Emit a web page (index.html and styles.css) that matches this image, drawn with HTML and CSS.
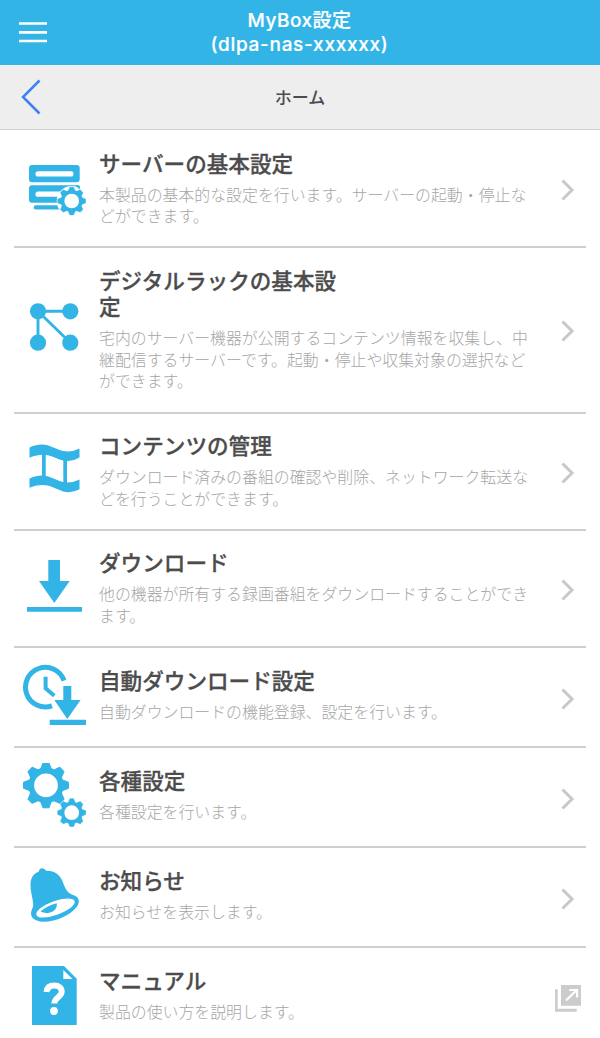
FILE: index.html
```html
<!DOCTYPE html>
<html lang="ja">
<head>
<meta charset="utf-8">
<title>MyBox設定</title>
<link rel="stylesheet" href="styles.css">
</head>
<body>
<svg class="defs" width="0" height="0">
  <symbol id="gear" viewBox="-24 -24 48 48">
    <circle r="14.800" fill="none" stroke="currentColor" stroke-width="5.800"/>
    <g fill="currentColor" stroke="currentColor" stroke-width="1" stroke-linejoin="round">
      <path id="tooth" d="M-3-22.500H3L5.500-16h-11z"/>
      <use href="#tooth" transform="rotate(45)"/><use href="#tooth" transform="rotate(90)"/>
      <use href="#tooth" transform="rotate(135)"/><use href="#tooth" transform="rotate(180)"/>
      <use href="#tooth" transform="rotate(225)"/><use href="#tooth" transform="rotate(270)"/>
      <use href="#tooth" transform="rotate(315)"/>
    </g>
  </symbol>
  <symbol id="chevron" viewBox="0 0 14 22">
    <path d="M1.500 1.500L11 11l-9.500 9.500" fill="none" stroke="currentColor" stroke-width="3"/>
  </symbol>
</svg>

<header class="header">
  <svg class="menu" viewBox="0 0 28 22"><path d="M0 1.500h28M0 10.300h28M0 19h28" stroke="currentColor" stroke-width="2.700"/></svg>
  <h1 class="brand"><span class="brand-name">MyBox設定</span><span class="brand-host">(dlpa-nas-xxxxxx)</span></h1>
</header>
<nav class="subbar">
  <svg class="back" viewBox="0 0 20 36"><path d="M18.500 1.500L2 18l16.500 16.500" fill="none" stroke="currentColor" stroke-width="2.500"/></svg>
  <h2 class="page-title">ホーム</h2>
</nav>

<main class="list">
  <a class="row">
    <svg class="icon" viewBox="0 0 64 68">
      <rect x="7" y="10" width="50.700" height="17.300" rx="3" fill="currentColor"/>
      <rect x="13.500" y="16.200" width="38" height="5.300" rx="2.600" fill="#fff"/>
      <rect x="7" y="30.300" width="50.700" height="17.400" rx="3" fill="currentColor"/>
      <rect x="13.500" y="36.500" width="38" height="5.300" rx="2.600" fill="#fff"/>
      <rect x="11.700" y="50.300" width="30" height="4.200" rx="2" fill="currentColor"/>
      <circle cx="49.700" cy="46" r="15" fill="#fff"/>
      <path d="M53.500 30.200h3.200q1 0 1 1v3.500z" fill="currentColor"/>
      <use href="#gear" x="34.900" y="31.200" width="29.600" height="29.600"/>
    </svg>
    <div class="text"><h3 class="title">サーバーの基本設定</h3><p class="desc">本製品の基本的な設定を行います。サーバーの起動・停止な<br>どができます。</p></div>
    <svg class="chevron"><use href="#chevron"/></svg>
  </a>
  <a class="row">
    <svg class="icon" viewBox="0 0 64 68">
      <path d="M48.300 15.300H16v31.400M16 15.300l32.300 31.400" fill="none" stroke="currentColor" stroke-width="2.900"/>
      <g fill="currentColor"><circle cx="16" cy="15.300" r="8.100"/><circle cx="48.300" cy="15.300" r="8.100"/><circle cx="16" cy="46.700" r="8.100"/><circle cx="48.300" cy="46.700" r="8.100"/></g>
    </svg>
    <div class="text"><h3 class="title">デジタルラックの基本設<br>定</h3><p class="desc">宅内のサーバー機器が公開するコンテンツ情報を収集し、中<br>継配信するサーバーです。起動・停止や収集対象の選択など<br>ができます。</p></div>
    <svg class="chevron"><use href="#chevron"/></svg>
  </a>
  <a class="row">
    <svg class="icon" viewBox="0 0 64 68">
      <g fill="currentColor">
        <path d="M7.500 10.500C24 3 31 12 41 14q9 1.500 16.500-2.500v9q-8 5-16.500 3C30 20.500 24 14 7.500 20.700z"/>
        <path d="M7.500 41.500C24 34 31 43 41 45q9 1.500 16.500-2.500v9.700q-8 4.500-16.500 2.200C30 50.500 24 44.500 7.500 50.700z"/>
        <path d="M20 15.500h3.700v25H20zM41.300 22h3.700v24h-3.700z"/>
      </g>
    </svg>
    <div class="text"><h3 class="title">コンテンツの管理</h3><p class="desc">ダウンロード済みの番組の確認や削除、ネットワーク転送な<br>どを行うことができます。</p></div>
    <svg class="chevron"><use href="#chevron"/></svg>
  </a>
  <a class="row">
    <svg class="icon" viewBox="0 0 64 68"><path fill="currentColor" d="M26.300 5H38v21h9.700L32.300 48 17 26h9.300zM5 52h55v4.700H5z"/></svg>
    <div class="text"><h3 class="title">ダウンロード</h3><p class="desc">他の機器が所有する録画番組をダウンロードすることができ<br>ます。</p></div>
    <svg class="chevron"><use href="#chevron"/></svg>
  </a>
  <a class="row">
    <svg class="icon" viewBox="0 0 64 68">
      <path d="M42 17.600A19.800 19.800 0 1 0 30 42.800" fill="none" stroke="currentColor" stroke-width="5"/>
      <path d="M23.600 13.700V25.300L32.300 32.700" fill="none" stroke="currentColor" stroke-width="4"/>
      <path fill="currentColor" d="M41.300 23h8v14h9.300L45.300 56l-13-19h9zM27.700 56.700H64V62H27.700z"/>
    </svg>
    <div class="text"><h3 class="title">自動ダウンロード設定</h3><p class="desc">自動ダウンロードの機能登録、設定を行います。</p></div>
    <svg class="chevron"><use href="#chevron"/></svg>
  </a>
  <a class="row">
    <svg class="icon" viewBox="0 0 64 68">
      <use href="#gear" x="0" y="-1.700" width="48" height="48"/>
      <use href="#gear" x="34.900" y="34.900" width="29.600" height="29.600"/>
    </svg>
    <div class="text"><h3 class="title">各種設定</h3><p class="desc">各種設定を行います。</p></div>
    <svg class="chevron"><use href="#chevron"/></svg>
  </a>
  <a class="row">
    <svg class="icon" viewBox="0 0 64 68">
      <path fill="currentColor" d="M16.700 8.700Q17.300 5.300 20 5.200T24 7.700C31 7.400 37 10.500 40 17 43 24.500 44.500 30 51 32 57 33.500 58.500 39 55 43.500 49 52 34 58.700 22 58.700 12 58.700 7.500 54 9.500 47.500 10.500 45 11.600 43.500 11.100 40 10.600 34 8.300 28 8.500 21.500 8.700 14.500 11.500 10.500 16.700 8.700z"/>
      <ellipse cx="33.500" cy="45" rx="20.300" ry="6.900" transform="rotate(-20 33.500 45)" fill="#fff"/>
      <path fill="currentColor" d="M18.500 48.600Q24 43 34.700 40.200C35.500 45 32.500 48.500 27 49.700Q22.500 50.600 18.500 48.600z"/>
    </svg>
    <div class="text"><h3 class="title">お知らせ</h3><p class="desc">お知らせを表示します。</p></div>
    <svg class="chevron"><use href="#chevron"/></svg>
  </a>
  <a class="row">
    <svg class="icon" viewBox="0 0 64 68">
      <path fill="currentColor" d="M10 2h32l12.700 12.700V61H10z"/>
      <path fill="#fff" d="M41.300 6v8.900h9.200z"/>
      <path d="M24.500 28C25 23 28 21.500 32.200 21.500 37 21.500 39.700 24 39.700 27.500c0 5.500-7.400 6-7.400 12" fill="none" stroke="#fff" stroke-width="6"/>
      <circle cx="32" cy="47" r="3.900" fill="#fff"/>
    </svg>
    <div class="text"><h3 class="title">マニュアル</h3><p class="desc">製品の使い方を説明します。</p></div>
    <svg class="external" viewBox="0 0 26 27">
      <path fill="currentColor" d="M6 0h20v20.700H6zM0 4.300h2.700v19.500h19V26.700H0z"/>
      <path d="M11 15.500L21.800 5M14.300 5h7.800v7.500" fill="none" stroke="#fff" stroke-width="2.200"/>
    </svg>
  </a>
</main>
</body>
</html>
```
FILE: styles.css
```css
* { box-sizing: border-box; }
body {
  margin: 0;
  height: 1038px;
  overflow: hidden;
  background: #fff;
  font-family: "Noto Sans CJK JP", sans-serif;
}
h1, h2, h3, p { margin: 0; }
.defs { position: absolute; }

.header, .subbar {
  display: grid;
  grid-template-columns: 60px 1fr 60px;
  align-items: center;
  height: 65px;
}
.header { background: #33b4e6; color: #fff; }
.menu { width: 28px; height: 22px; margin-left: 19px; }
.brand {
  display: flex;
  flex-direction: column;
  align-items: center;
  margin-left: -1px;
  font-family: Inter, "Noto Sans CJK JP", sans-serif;
  font-size: 19px;
  line-height: 23.500px;
  font-weight: 500;
  -webkit-text-stroke: 0.200px #fff;
}
.brand-name { letter-spacing: 0.500px; }
.brand-host { letter-spacing: 0.700px; }

.subbar { background: #eee; border-bottom: 1px solid #d4d4d4; }
.back { width: 20px; height: 36px; margin-left: 21px; color: #3c82f6; }
.page-title {
  text-align: center;
  font-size: 17px;
  line-height: 24px;
  font-weight: 500;
  color: #4c4c4c;
}

.list { padding: 1px 14px 0; }
.row {
  display: flex;
  align-items: center;
  min-height: 100px;
  padding: 0 11px 0 8px;
  border-bottom: 2px solid #cfcfcf;
}
.row:last-child { border-bottom: 0; }
.icon { flex: none; width: 64px; height: 68px; margin-right: 13px; color: #33b4e6; }
.text { flex: 1; align-self: flex-start; padding: 18.500px 0 19.500px; white-space: nowrap; }
.title {
  font-size: 21.600px;
  line-height: 26px;
  font-weight: 500;
  color: #4c4c4c;
  -webkit-text-stroke: 0.300px #4c4c4c;
}
.desc {
  margin-top: 8px;
  font-size: 15.900px;
  line-height: 21.700px;
  font-weight: 300;
  color: #a6a6a6;
}
.chevron { flex: none; width: 14px; height: 22px; margin-top: 3px; color: #c8c8c8; }
.external { flex: none; width: 26px; height: 27px; margin-right: -6px; color: #ccc; }
```
